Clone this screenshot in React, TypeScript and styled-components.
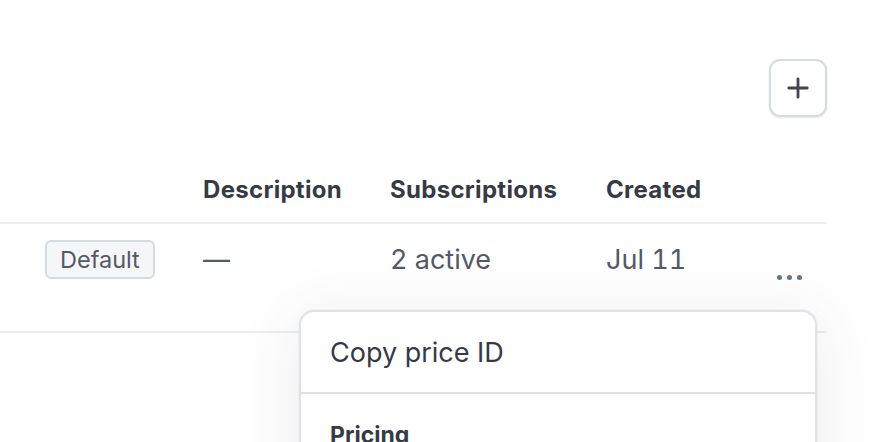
import styled, { createGlobalStyle } from 'styled-components';

const GlobalStyle = createGlobalStyle`
  html, body {
    margin: 0;
    padding: 0;
    background: #ffffff;
    font-family: Inter, "Noto Sans", sans-serif;
    -webkit-font-smoothing: antialiased;
  }
  * {
    box-sizing: border-box;
  }
`;

const columns = '203px 187px 216px 171px 1fr';

const App = () => {
  return (
    <>
      <GlobalStyle />
      <Page>
        <Toolbar>
          <IconButton aria-label="Add">
            <svg width="26" height="26" viewBox="0 0 24 24" fill="none">
              <path
                d="M12 3.5v17M3.5 12h17"
                stroke="#414552"
                strokeWidth="2.6"
                strokeLinecap="round"
              />
            </svg>
          </IconButton>
        </Toolbar>

        <Table>
          <HeaderRow>
            <HeaderCell />
            <HeaderCell>Description</HeaderCell>
            <HeaderCell>Subscriptions</HeaderCell>
            <HeaderCell>Created</HeaderCell>
            <HeaderCell />
          </HeaderRow>

          <Row>
            <Cell>
              <Badge>Default</Badge>
            </Cell>
            <Cell>—</Cell>
            <Cell>2 active</Cell>
            <Cell>Jul 11</Cell>
            <Actions>
              <Dot />
              <Dot />
              <Dot />
            </Actions>
          </Row>

          <Menu>
            <MenuItem>Copy price ID</MenuItem>
            <MenuSection>
              <MenuTitle>Pricing</MenuTitle>
            </MenuSection>
          </Menu>
        </Table>
      </Page>
    </>
  );
};

export default App;

const Page = styled.div`
  width: 874px;
  height: 442px;
  overflow: hidden;
  padding: 59px 47px 0 0;
`;

const Toolbar = styled.div`
  display: flex;
  justify-content: flex-end;
`;

const IconButton = styled.button`
  width: 58px;
  height: 58px;
  display: flex;
  align-items: center;
  justify-content: center;
  padding: 0;
  background: #ffffff;
  border: 2px solid #d5dbe1;
  border-radius: 11px;
  box-shadow: 0 1px 2px rgba(64, 68, 82, 0.12);
  cursor: pointer;
`;

const Table = styled.div`
  position: relative;
`;

const HeaderRow = styled.div`
  display: grid;
  grid-template-columns: ${columns};
  align-items: end;
  height: 107px;
  padding-bottom: 18px;
  border-bottom: 2px solid #ebeef1;
`;

const HeaderCell = styled.div`
  font-size: 24px;
  line-height: 29px;
  font-weight: 700;
  letter-spacing: 0.3px;
  color: #353a44;
  white-space: nowrap;
`;

const Row = styled.div`
  display: grid;
  grid-template-columns: ${columns};
  align-items: start;
  height: 109px;
  padding-top: 20px;
  border-bottom: 2px solid #ebeef1;
`;

const Cell = styled.div`
  font-size: 27px;
  line-height: 32px;
  color: #545969;
  font-variant-numeric: tabular-nums;
  white-space: nowrap;
`;

const Badge = styled.span`
  display: inline-flex;
  align-items: center;
  margin: -4px 0 0 45px;
  height: 39px;
  padding: 0 13px;
  font-size: 23.5px;
  line-height: 1;
  color: #545969;
  background: #f5f6f8;
  border: 2px solid #d5dbe1;
  border-radius: 6px;
  vertical-align: top;
`;

const Actions = styled.div`
  display: flex;
  gap: 5px;
  margin-top: 31px;
`;

const Dot = styled.span`
  width: 5px;
  height: 5px;
  border-radius: 50%;
  background: #687385;
`;

const Menu = styled.div`
  position: absolute;
  left: 299px;
  top: 193px;
  width: 518px;
  height: 200px;
  background: #ffffff;
  border: 2px solid #dfe3e8;
  border-radius: 15px;
  box-shadow: 0 0 0 1px rgba(64, 68, 82, 0.04), 0 8px 60px 8px rgba(64, 68, 82, 0.08);
`;

const MenuItem = styled.div`
  display: flex;
  align-items: center;
  height: 82px;
  padding-left: 29px;
  font-size: 27px;
  color: #353a44;
  border-bottom: 2px solid #dfe3e8;
`;

const MenuSection = styled.div`
  padding: 27px 0 0 29px;
`;

const MenuTitle = styled.div`
  font-size: 23px;
  line-height: 28px;
  font-weight: 700;
  color: #353a44;
`;
